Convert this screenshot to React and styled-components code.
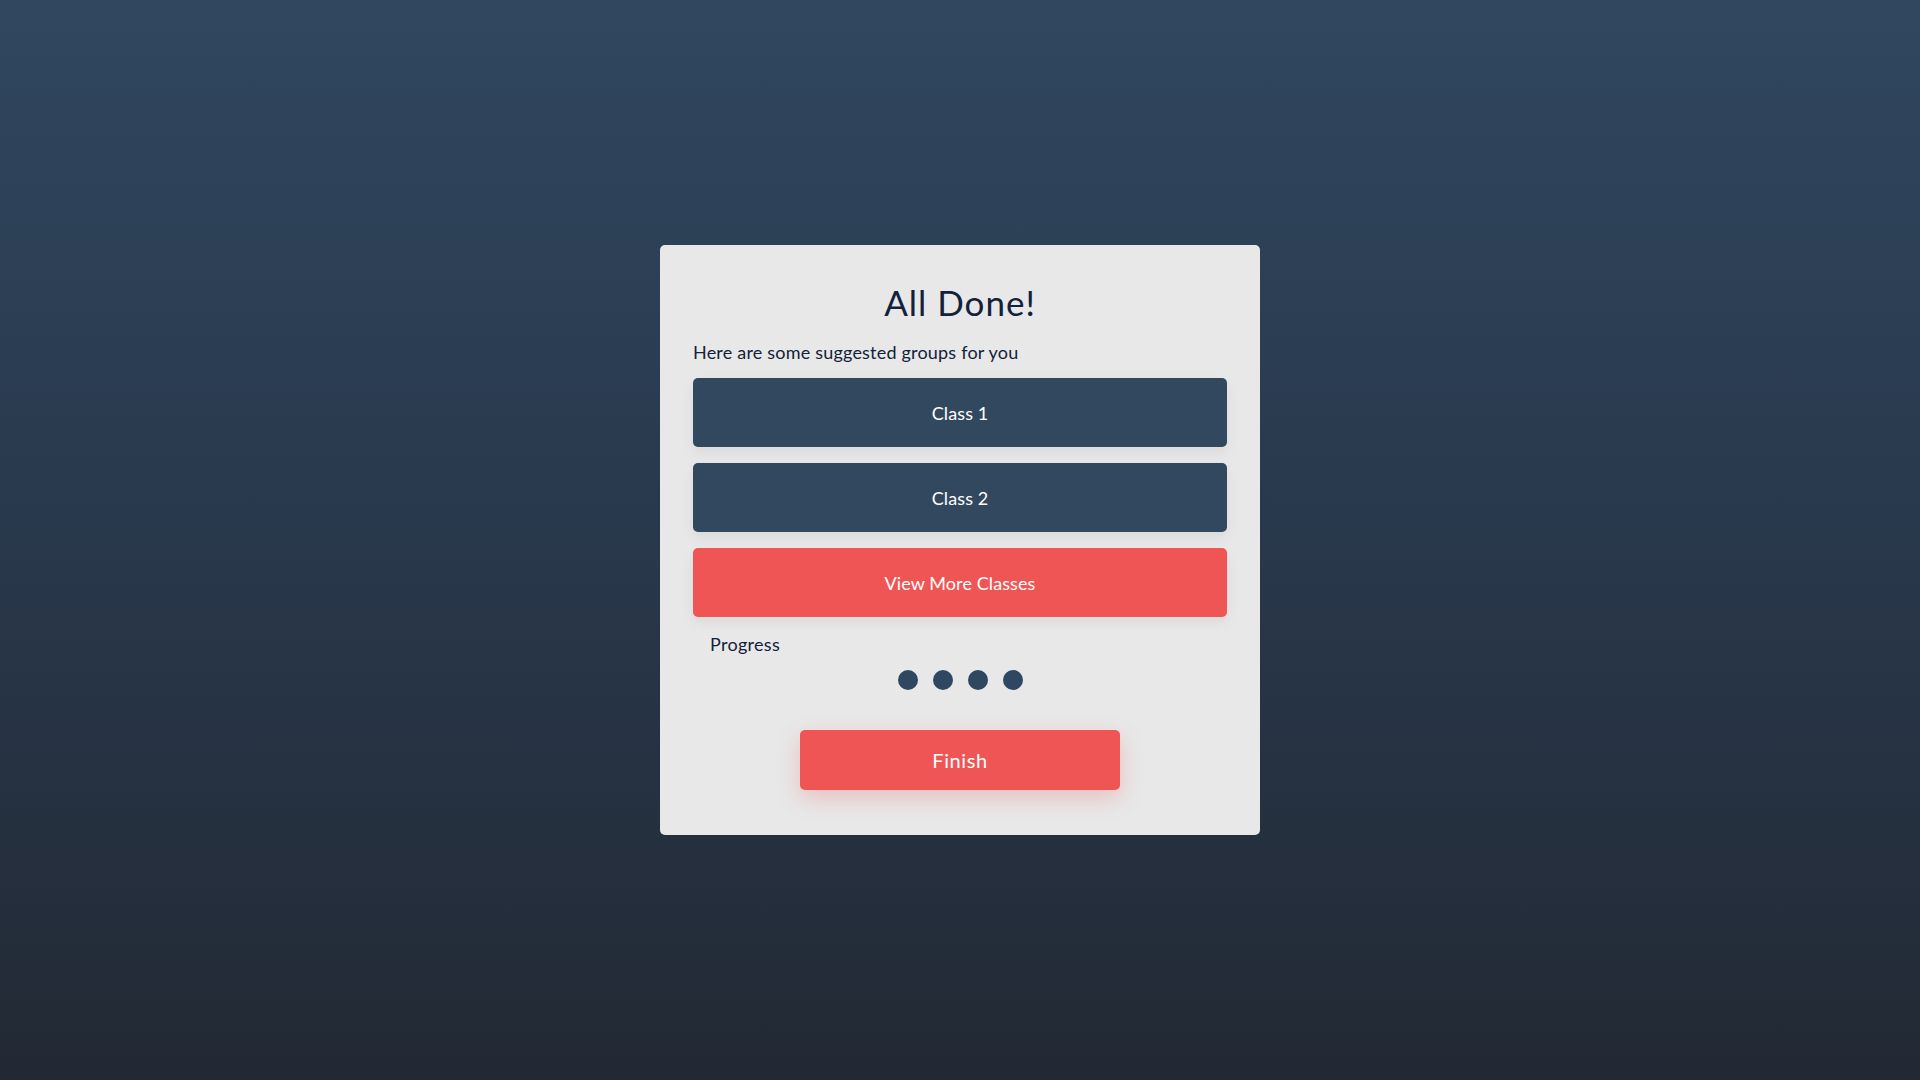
import React from 'react';
import styled, { createGlobalStyle } from 'styled-components';

const GlobalStyle = createGlobalStyle`
  html, body {
    margin: 0;
    padding: 0;
    height: 100%;
  }
  body {
    font-family: 'Lato', 'Noto Sans', sans-serif;
    color: #13213a;
  }
  #root {
    min-height: 100vh;
  }
`;

const Page = styled.div`
  min-height: 100vh;
  display: flex;
  align-items: center;
  justify-content: center;
  background: linear-gradient(180deg, #30475f 0%, #2a3b50 40%, #222934 100%);
`;

const Card = styled.div`
  width: 534px;
  padding: 37px 33px 45px;
  background: #e8e8e8;
  border-radius: 5px;
  display: flex;
  flex-direction: column;
`;

const Title = styled.h1`
  margin: 0;
  font-size: 35px;
  line-height: 40px;
  font-weight: 400;
  letter-spacing: 1px;
  text-align: center;
  color: #13213a;
`;

const Subtitle = styled.p`
  margin: 19px 0 15px;
  font-size: 18px;
  line-height: 22px;
  letter-spacing: 0.2px;
`;

const OptionList = styled.div`
  display: flex;
  flex-direction: column;
  gap: 16px;
`;

const OptionButton = styled.button`
  height: 69px;
  border: none;
  border-radius: 5px;
  background: ${(p) => (p.$accent ? '#f05556' : '#32485f')};
  color: #ffffff;
  font-family: 'Lato', 'Noto Sans', sans-serif;
  font-size: 18px;
  letter-spacing: 0.1px;
  cursor: pointer;
  box-shadow: 0 6px 14px rgba(0, 0, 0, 0.06);
`;

const ProgressLabel = styled.div`
  margin: 16px 0 0 17px;
  font-size: 18px;
  line-height: 22px;
  letter-spacing: 0.3px;
`;

const Dots = styled.div`
  margin-top: 15px;
  display: flex;
  justify-content: center;
  gap: 15px;
`;

const Dot = styled.span`
  width: 20px;
  height: 20px;
  border-radius: 50%;
  background: ${(p) => (p.$active ? '#2f4760' : '#b8bec6')};
`;

const FinishButton = styled.button`
  align-self: center;
  margin-top: 40px;
  width: 320px;
  height: 60px;
  border: none;
  border-radius: 5px;
  background: #f05556;
  color: #ffffff;
  font-family: 'Lato', 'Noto Sans', sans-serif;
  font-size: 20px;
  letter-spacing: 0.6px;
  cursor: pointer;
  box-shadow: 0 8px 22px rgba(240, 85, 86, 0.28);
`;

const classes = ['Class 1', 'Class 2'];
const steps = [true, true, true, true];

function App() {
    return (
        <>
            <GlobalStyle />
            <Page>
                <Card>
                    <Title>All Done!</Title>
                    <Subtitle>Here are some suggested groups for you</Subtitle>
                    <OptionList>
                        {classes.map((name) => (
                            <OptionButton key={name}>{name}</OptionButton>
                        ))}
                        <OptionButton $accent>View More Classes</OptionButton>
                    </OptionList>
                    <ProgressLabel>Progress</ProgressLabel>
                    <Dots>
                        {steps.map((done, i) => (
                            <Dot key={i} $active={done} />
                        ))}
                    </Dots>
                    <FinishButton>Finish</FinishButton>
                </Card>
            </Page>
        </>
    );
}

export default App;
